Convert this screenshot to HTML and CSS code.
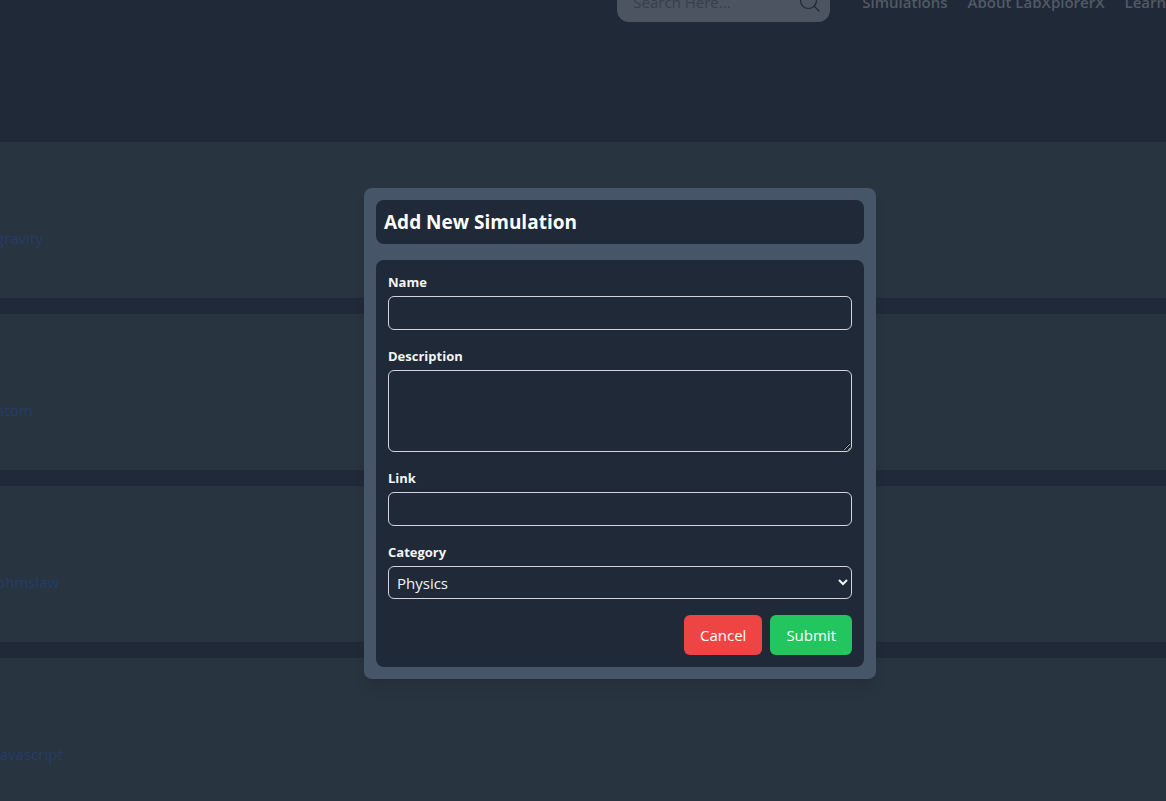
FILE: index.html
```html
<!DOCTYPE html>
<html lang="en">
<head>
<meta charset="utf-8">
<meta name="viewport" content="width=device-width, initial-scale=1">
<title>LabXplorerX</title>
<link rel="stylesheet" href="styles.css">
</head>
<body>
<header class="header">
  <label class="search">
    <input class="search-input" type="search" placeholder="Search Here..." aria-label="Search">
    <svg class="search-icon" viewBox="0 0 24 24" aria-hidden="true"><circle cx="10.500" cy="10.500" r="8"/><path d="M16.200 16.200L21 21"/></svg>
  </label>
  <nav class="nav">
    <a href="#simulations">Simulations</a>
    <a href="#about">About LabXplorerX</a>
    <a href="#learn">Learn</a>
  </nav>
</header>
<main class="list">
  <article class="card"><a class="card-link" href="#gravity">gravity</a></article>
  <article class="card"><a class="card-link" href="#atom">atom</a></article>
  <article class="card"><a class="card-link" href="#ohmslaw">ohmslaw</a></article>
  <article class="card"><a class="card-link" href="#javascript">javascript</a></article>
</main>
<div class="overlay">
  <section class="modal" role="dialog" aria-labelledby="dialog-title">
    <h2 class="modal-title" id="dialog-title">Add New Simulation</h2>
    <form class="form">
      <div class="field">
        <label class="label" for="name">Name</label>
        <input class="control" id="name" type="text">
      </div>
      <div class="field">
        <label class="label" for="description">Description</label>
        <textarea class="control control-area" id="description"></textarea>
      </div>
      <div class="field">
        <label class="label" for="link">Link</label>
        <input class="control" id="link" type="text">
      </div>
      <div class="field">
        <label class="label" for="category">Category</label>
        <select class="control control-select" id="category"><option>Physics</option></select>
      </div>
      <div class="actions">
        <button class="button button-cancel" type="button">Cancel</button>
        <button class="button button-submit" type="submit">Submit</button>
      </div>
    </form>
  </section>
</div>
</body>
</html>
```
FILE: styles.css
```css
* { box-sizing: border-box; }

body {
  margin: 0;
  height: 100vh;
  overflow: hidden;
  background: #202937;
  color: #fff;
  font: 15px/24px "Segoe UI", "Open Sans", "Noto Sans", sans-serif;
}

input, textarea, select, button { font: inherit; }

.header {
  display: flex;
  justify-content: flex-end;
  align-items: flex-start;
  gap: 32px;
  height: 142px;
  overflow: hidden;
}

.search {
  display: flex;
  align-items: center;
  width: 213px;
  height: 40px;
  margin-top: -18px;
  padding: 0 8px 0 16px;
  border-radius: 12px;
  background: #4c5361;
}

.search-input {
  flex: 1;
  min-width: 0;
  padding: 0;
  border: 0;
  background: none;
}

.search-input::placeholder { color: #363f4c; opacity: 1; }

.search-icon {
  width: 24px;
  height: 24px;
  fill: none;
  stroke: #202735;
  stroke-width: 1.2;
  stroke-linecap: round;
}

.nav {
  display: flex;
  gap: 20px;
  margin-top: -10px;
  font-weight: 600;
  white-space: nowrap;
}

.nav a { color: #525a65; text-decoration: none; }

.list { display: grid; gap: 16px; }

.card {
  height: 156px;
  padding-top: 84px;
  background: #283440;
}

.card-link {
  margin-left: -4px;
  color: #263c68;
  text-decoration: none;
}

.overlay {
  position: fixed;
  inset: 0;
  display: flex;
  align-items: center;
  justify-content: center;
  padding: 66px 0 0 74px;
}

.modal {
  display: grid;
  gap: 16px;
  width: 100%;
  max-width: 512px;
  padding: 12px;
  border-radius: 8px;
  background: #475569;
  box-shadow: 0 10px 15px -3px #0000001a, 0 4px 6px -4px #0000001a;
}

.modal-title {
  margin: 0;
  padding: 8px;
  border-radius: 8px;
  background: #1f2937;
  font-size: 19px;
  line-height: 28px;
  font-weight: 700;
}

.form {
  display: grid;
  gap: 16px;
  padding: 12px;
  border-radius: 8px;
  background: #1f2937;
}

.field { display: grid; gap: 4px; }

.label {
  color: #f3f4f6;
  font-size: 13px;
  line-height: 20px;
  font-weight: 700;
}

.control {
  width: 100%;
  height: 34px;
  padding: 4px 8px;
  border: 1px solid #d1d5db;
  border-radius: 6px;
  background: #1f2937;
  color: #f3f4f6;
}

.control-area { height: 82px; resize: vertical; }

.control-select { height: 33px; padding: 0 4px; }

.actions { display: flex; justify-content: flex-end; gap: 8px; }

.button {
  padding: 8px 16px;
  border: 0;
  border-radius: 6px;
  color: #fff;
}

.button-cancel { background: #ef4444; }
.button-submit { background: #22c55e; }
```
